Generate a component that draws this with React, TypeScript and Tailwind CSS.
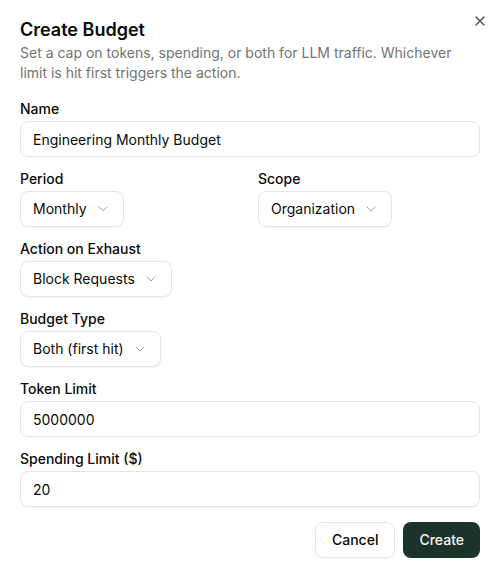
import { ChevronDown, X } from "lucide-react";

function Field({ label, children }: { label: string; children: React.ReactNode }) {
  return (
    <div className="flex flex-col gap-0.5">
      <label className="text-sm leading-5 font-medium text-[#0a0a0a]">{label}</label>
      {children}
    </div>
  );
}

function TextInput({ value }: { value: string }) {
  return (
    <input
      readOnly
      value={value}
      className="h-9 w-full rounded-lg border border-[#e5e5e5] bg-white px-3 text-sm text-[#0a0a0a] outline-none shadow-[0_1px_2px_rgba(0,0,0,0.04)]"
    />
  );
}

function SelectBox({ value }: { value: string }) {
  return (
    <div className="flex">
      <button className="flex h-9 items-center gap-2 rounded-lg border border-[#e5e5e5] bg-white px-3 text-sm text-[#0a0a0a] shadow-[0_1px_2px_rgba(0,0,0,0.04)]">
        <span>{value}</span>
        <ChevronDown size={16} className="text-[#a3a3a3]" strokeWidth={1.5} />
      </button>
    </div>
  );
}

export default function App() {
  return (
    <div
      className="relative min-h-[577px] w-[501px] bg-white pl-5 pr-[21px] pt-[21px] pb-5 text-[#0a0a0a]"
      style={{ fontFamily: "Inter, 'Liberation Sans', sans-serif" }}
    >
      <button className="absolute right-[13px] top-[13px] text-[#525252]">
        <X size={16} strokeWidth={2} />
      </button>

      <div className="flex flex-col gap-1">
        <h2 className="text-lg leading-[18px] font-semibold">Create Budget</h2>
        <p className="text-sm leading-5 text-[#737373]">
          Set a cap on tokens, spending, or both for LLM traffic. Whichever limit is hit first triggers the action.
        </p>
      </div>

      <div className="mt-4 flex flex-col gap-3">
        <Field label="Name">
          <TextInput value="Engineering Monthly Budget" />
        </Field>

        <div className="grid grid-cols-2 gap-4">
          <Field label="Period">
            <SelectBox value="Monthly" />
          </Field>
          <Field label="Scope">
            <SelectBox value="Organization" />
          </Field>
        </div>

        <Field label="Action on Exhaust">
          <SelectBox value="Block Requests" />
        </Field>

        <Field label="Budget Type">
          <SelectBox value="Both (first hit)" />
        </Field>

        <Field label="Token Limit">
          <TextInput value="5000000" />
        </Field>

        <Field label="Spending Limit ($)">
          <TextInput value="20" />
        </Field>
      </div>

      <div className="mt-[15px] flex justify-end gap-2">
        <button className="h-9 rounded-lg border border-[#e5e5e5] bg-white px-4 text-sm font-medium shadow-[0_1px_2px_rgba(0,0,0,0.04)]">
          Cancel
        </button>
        <button className="h-9 rounded-lg bg-[#1b3328] px-4 text-sm font-medium text-[#f5f5f5]">
          Create
        </button>
      </div>
    </div>
  );
}
